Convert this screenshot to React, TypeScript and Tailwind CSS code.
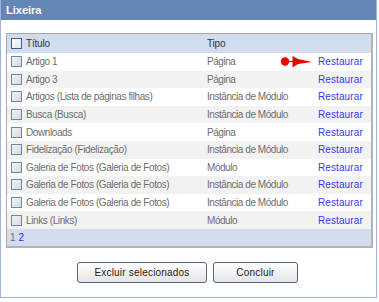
import React from "react";

const rows: [string, string][] = [
  ["Artigo 1", "Página"],
  ["Artigo 3", "Página"],
  ["Artigos (Lista de páginas filhas)", "Instância de Módulo"],
  ["Busca (Busca)", "Instância de Módulo"],
  ["Downloads", "Página"],
  ["Fidelização (Fidelização)", "Instância de Módulo"],
  ["Galeria de Fotos (Galeria de Fotos)", "Módulo"],
  ["Galeria de Fotos (Galeria de Fotos)", "Instância de Módulo"],
  ["Galeria de Fotos (Galeria de Fotos)", "Instância de Módulo"],
  ["Links (Links)", "Módulo"],
];

function Box({ header }: { header?: boolean }) {
  return (
    <span
      className={
        header
          ? "block w-[11px] h-[11px] border border-[#3f5f8c] bg-gradient-to-br from-[#ffffff] to-[#dfe6f0]"
          : "block w-[11px] h-[11px] border border-[#6f87a6] bg-gradient-to-br from-[#f4f4f4] to-[#d6d9de]"
      }
    />
  );
}

function Arrow() {
  return (
    <svg width="33" height="13" viewBox="0 0 33 13" className="block">
      <circle cx="5" cy="6.5" r="4.2" fill="#ee0000" />
      <line x1="8" y1="6.5" x2="13" y2="6.5" stroke="#ee0000" strokeWidth="1.2" />
      <path d="M12.5 1 L12.5 12.5 L18 9 L32 7 L18 4 Z" fill="#ee0000" />
    </svg>
  );
}

export default function App() {
  return (
    <div
      className="w-[379px] h-[302px] bg-white"
      style={{ fontFamily: '"Liberation Sans", Arial, sans-serif' }}
    >
      <div className="w-[377px] h-[298px] border-x border-b border-[#9fb5d5] flex flex-col">
        <div className="h-[20px] bg-[#6386b4] flex items-center pl-[5px] text-white font-bold text-[11px] shrink-0">
          Lixeira
        </div>
        <div className="pt-[13px] pl-[5px] pr-[3px]">
          <div className="border border-[#a8a8a8] border-r-2 border-b-2 border-r-[#b3b3b3] border-b-[#b3b3b3]">
            <div className="h-[19px] bg-[#d1ddee] flex items-center text-[10px] text-[#333] tracking-[-0.2px]">
              <span className="w-[19px] pl-[4px] shrink-0">
                <Box header />
              </span>
              <span className="w-[181px] shrink-0">Título</span>
              <span>Tipo</span>
            </div>
            {rows.map(([name, tipo], i) => (
              <div
                key={i}
                className={
                  (i % 2 === 1 ? "bg-[#f2f2f2] " : "bg-white ") +
                  "h-[17.6px] flex items-center text-[10px] text-[#6e6e6e]"
                }
              >
                <span className="w-[19px] pl-[4px] shrink-0">
                  <Box />
                </span>
                <span className="w-[181px] shrink-0 tracking-[-0.4px]">{name}</span>
                <span className="w-[73px] shrink-0 tracking-[-0.45px] whitespace-nowrap">{tipo}</span>
                <span className="w-[38px] shrink-0 flex justify-start">
                  {i === 0 ? <Arrow /> : null}
                </span>
                <span className="text-[#3838f0] tracking-[0.1px]">Restaurar</span>
              </div>
            ))}
            <div className="h-[17px] bg-[#d1ddee] flex items-center pl-[3px] text-[10px] gap-[3px]">
              <span className="text-[#707070]">1</span>
              <span className="text-[#2a2ae8]">2</span>
            </div>
          </div>
        </div>
        <div className="flex justify-center gap-[6px] mt-[14px] pr-[2px]">
          <button className="w-[130px] h-[21px] rounded-[3px] border border-[#4f6688] bg-gradient-to-b from-[#ffffff] to-[#e4e4e4] text-[10px] text-[#222] tracking-[0.2px]">
            Excluir selecionados
          </button>
          <button className="w-[85px] h-[21px] rounded-[3px] border border-[#4f6688] bg-gradient-to-b from-[#ffffff] to-[#e4e4e4] text-[10px] text-[#222] tracking-[0.2px]">
            Concluir
          </button>
        </div>
      </div>
    </div>
  );
}
